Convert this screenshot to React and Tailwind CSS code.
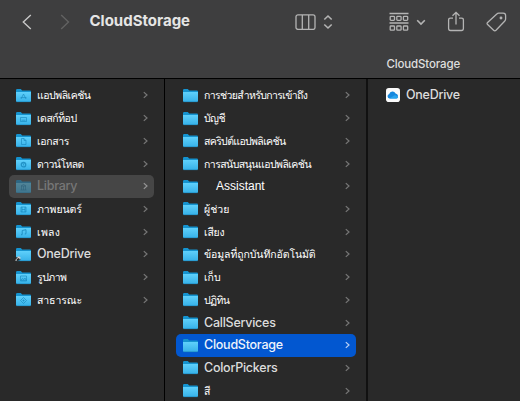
const favorites = [
  { name: "แอปพลิเคชัน", glyph: "app", fit: "tracking-[-0.5px]" },
  { name: "เดสก์ท็อป", glyph: "desktop", fit: "tracking-[-0.5px]" },
  { name: "เอกสาร", glyph: "doc", fit: "tracking-[-0.35px]" },
  { name: "ดาวน์โหลด", glyph: "download", fit: "tracking-[-0.6px]" },
  { name: "Library", glyph: "library", state: "dimmed", latin: true },
  { name: "ภาพยนตร์", glyph: "movie", fit: "tracking-[-0.1px]" },
  { name: "เพลง", glyph: "music", fit: "tracking-[0.3px]" },
  { name: "OneDrive", glyph: "alias", latin: true },
  { name: "รูปภาพ", glyph: "picture", fit: "tracking-[-0.5px]" },
  { name: "สาธารณะ", glyph: "public", fit: "tracking-[-0.1px]" },
];

const library = [
  { name: "การช่วยสำหรับการเข้าถึง", fit: "tracking-[-0.63px]" },
  { name: "บัญชี", fit: "tracking-[-0.6px]" },
  { name: "สคริปต์แอปพลิเคชัน", fit: "tracking-[-0.65px]" },
  { name: "การสนับสนุนแอปพลิเคชัน", fit: "tracking-[-0.55px]" },
  { name: "Assistant", fit: "pl-3 text-[12px]" },
  { name: "ผู้ช่วย" },
  { name: "เสียง", fit: "tracking-[-0.2px]" },
  { name: "ข้อมูลที่ถูกบันทึกอัตโนมัติ", fit: "tracking-[-0.1px]" },
  { name: "เก็บ" },
  { name: "ปฏิทิน", fit: "tracking-[-0.6px]" },
  { name: "CallServices", latin: true },
  { name: "CloudStorage", state: "selected", latin: true },
  { name: "ColorPickers", latin: true },
  { name: "สี" },
];

const glyphs = {
  app: <path d="M7.5 6 5 11M7.5 6l2.5 5M4.5 9.6h6" />,
  desktop: <path d="M4.5 6.5h6v4h-6zM5.5 9.2h4" />,
  doc: <path d="M5.5 5.5H8l2 2v4H5.5zM8 5.5v2h2" />,
  download: (
    <>
      <circle cx="7.5" cy="8.7" r="2.2" strokeWidth="1.3" />
      <path d="M7.5 7.5v2" />
    </>
  ),
  library: <path d="M4.5 11h6M5 7h5l-2.5-1.5zM5.5 7v4M7.5 7v4M9.5 7v4" />,
  movie: <path d="M5 6h5v5H5zM6 6v5M9 6v5M6 8.5h3" />,
  music: <path d="M6.2 10.5V6.5l3.8-.8v4M5 10.7h1.2M8.8 9.9H10" strokeWidth="1" />,
  picture: <path d="M4.5 6h6v5h-6zM5 10.3l1.5-2 1.3 1.2L9 8l1.3 2.3z" />,
  public: <path d="M7.5 5.5l3 3-3 3-3-3zM7.5 7.5v2M6.5 8.5h2" />,
};

function Folder({ glyph }) {
  return (
    <svg className="h-[15px] w-[15px] shrink-0 overflow-visible" viewBox="0 0 15 15" fill="none">
      <defs>
        <linearGradient id="folder" x1="0" y1="0" x2="0" y2="1">
          <stop offset="0" stopColor="#5fd0fb" />
          <stop offset="1" stopColor="#36b1e8" />
        </linearGradient>
      </defs>
      <path d="M0 2.2Q0 1 1.2 1H4.8L6.2 2.4H13.8Q15 2.4 15 3.6V7H0Z" fill="#1593cf" />
      <path d="M0 4H15V12.8Q15 14 13.8 14H1.2Q0 14 0 12.8Z" fill="url(#folder)" />
      <path d="M.4 13.7H14.6" stroke="#1b86bb" strokeWidth=".6" />
      {glyphs[glyph] && (
        <g stroke="#1787bd" strokeWidth=".8" opacity=".8">
          {glyphs[glyph]}
        </g>
      )}
      {glyph === "alias" && (
        <>
          <path d="M-.5 14.5V10.5L3.5 9.5 4.5 13z" fill="#292929" />
          <path d="M0 14C0 12 1 11 3.3 10.4M1.5 10H3.8V12.3" stroke="#e4e4e4" strokeWidth="1" />
        </>
      )}
    </svg>
  );
}

function RowChevron({ className }) {
  return (
    <svg className={`ml-auto h-2 w-[5px] shrink-0 ${className}`} viewBox="0 0 5 8" fill="none" stroke="currentColor" strokeWidth="1.2">
      <path d="M.8 1.1 4 4 .8 6.9" />
    </svg>
  );
}

const rowStyles = {
  dimmed: "bg-[#464646] text-[#777777]",
  selected: "bg-[#0257d0] text-[#eef3fb]",
};

function Row({ name, glyph, state, latin, fit = "" }) {
  return (
    <li className={`flex h-[22.72px] items-center rounded-[5px] pr-[6px] pl-[7px] ${rowStyles[state] || "text-[#dcdcdc]"}`}>
      <span className={`flex ${state === "dimmed" ? "opacity-45" : ""}`}>
        <Folder glyph={glyph} />
      </span>
      <span
        className={`ml-1.5 whitespace-nowrap leading-[22px] ${
          latin
            ? "font-['Inter','Liberation_Sans',sans-serif] text-[12.5px] font-medium tracking-[-0.25px]"
            : `font-['Liberation_Sans','Loma','Waree','Garuda','Noto_Sans_Thai_Looped','Noto_Sans_Thai',sans-serif] text-white ${fit.includes("text-") ? "" : "text-[10.5px]"} ${fit}`
        }`}
      >
        {name}
      </span>
      <RowChevron className={state === "selected" ? "text-[#b8d0f5]" : state === "dimmed" ? "text-[#969696]" : "text-[#777777]"} />
    </li>
  );
}

function Toolbar() {
  return (
    <header className="h-[79px] shrink-0 border-b border-black bg-[#3e3e3f] text-[#b4b4b4]">
      <div className="flex h-[43px] items-center pl-[22px]">
        <svg className="h-4 w-[10px]" viewBox="0 0 10 16" fill="none" stroke="#c8c8c8" strokeWidth="1.4">
          <path d="M8.8 1 1.3 8l7.5 7" />
        </svg>
        <svg className="ml-7 h-4 w-[10px]" viewBox="0 0 10 16" fill="none" stroke="#626262" strokeWidth="1.4">
          <path d="M1.2 1l7.3 7-7.3 7" />
        </svg>
        <h1 className="ml-[19.5px] w-[205px] font-['Inter','Liberation_Sans',sans-serif] text-[15px] font-bold text-[#e5e5e5]">CloudStorage</h1>
        <svg className="h-4 w-[21px]" viewBox="0 0 21 16" fill="none" stroke="currentColor" strokeWidth="1.3">
          <rect x="1" y=".8" width="19" height="14.6" rx="2" />
          <path d="M7.3 1v14M13.7 1v14" />
        </svg>
        <svg className="ml-[7px] h-4 w-[10px]" viewBox="0 0 10 16" fill="none" stroke="currentColor" strokeWidth="1.6">
          <path d="M1.3 5.5 5 2l3.7 3.5M1.3 10.5 5 14l3.7-3.5" />
        </svg>
        <svg className="ml-[56.5px] h-5 w-[20px]" viewBox="0 0 20 20" fill="none" stroke="currentColor" strokeWidth="1.3">
          <path d="M.5 1.5h19M.5 11h19" />
          {[1.2, 7.8, 14.4].map((x) => (
            <g key={x}>
              <rect x={x} y="4.3" width="4.3" height="4" rx=".8" />
              <rect x={x} y="14" width="4.3" height="4.2" rx=".8" />
            </g>
          ))}
        </svg>
        <svg className="ml-[7px] h-2 w-[10px]" viewBox="0 0 10 8" fill="none" stroke="currentColor" strokeWidth="1.6">
          <path d="M1.2 2.2 5 6 8.8 2.2" />
        </svg>
        <svg className="ml-[21px] h-[21px] w-[18px]" viewBox="0 0 18 21" fill="none" stroke="currentColor" strokeWidth="1.3">
          <path d="M6 7.2H3.5Q1.6 7.2 1.6 9v8.6q0 1.9 1.9 1.9h11q1.9 0 1.9-1.9V9q0-1.8-1.9-1.8H12M9 13.5V1.5M5.5 4.8 9 1.4l3.5 3.4" />
        </svg>
        <svg className="ml-[21px] h-5 w-[21px]" viewBox="0 0 21 20" fill="none" stroke="currentColor" strokeWidth="1.3" strokeLinejoin="round">
          <path d="M1.6 10.5 10.8 2q.8-.8 2-.8h4.4q2.4 0 2.4 2.4V7q0 1.2-.8 2L10 18.2q-1.2 1.2-2.4 0l-6-5.6q-1.1-1 0-2.1Z" />
          <circle cx="15" cy="6" r=".8" />
        </svg>
      </div>
      <div className="flex justify-end pt-[11px] pr-[60px] font-['Inter','Liberation_Sans',sans-serif] text-[11.5px] leading-5 font-medium tracking-[-0.15px] text-[#dedede]">
        CloudStorage
      </div>
    </header>
  );
}

export default function App() {
  return (
    <div className="flex h-[401px] w-[520px] flex-col overflow-hidden bg-[#292929]">
      <Toolbar />
      <main className="flex min-h-0 flex-1">
        <ul className="w-[165px] shrink-0 border-r border-black pt-[5px] pr-[10px] pl-[9px]">
          {favorites.map((item) => (
            <Row key={item.name} {...item} />
          ))}
        </ul>
        <ul className="w-[203px] shrink-0 border-r-2 border-[#111111] pt-[5px] pr-[10px] pl-[11px]">
          {library.map((item) => (
            <Row key={item.name} {...item} />
          ))}
        </ul>
        <section className="flex-1 pt-[5px] pl-[18px]">
          <div className="flex h-[22.72px] items-center font-['Inter','Liberation_Sans',sans-serif] text-[12.5px] font-medium tracking-[-0.25px] text-[#dcdcdc]">
            <svg className="mr-[6px] h-[14px] w-[14px]" viewBox="0 0 14 14">
              <rect width="14" height="14" rx="2.8" fill="#fafafa" />
              <path d="M3.7 10.5a2.3 2.3 0 0 1-.5-4.5 3.5 3.5 0 0 1 6.4-.6 2.7 2.7 0 0 1 .9 5.1Z" fill="#1688de" />
              <path d="M3.2 10.4 9 7l3.2 2.2a2 2 0 0 1-1.8 1.4H4Z" fill="#28a4ed" />
            </svg>
            OneDrive
          </div>
        </section>
      </main>
    </div>
  );
}
